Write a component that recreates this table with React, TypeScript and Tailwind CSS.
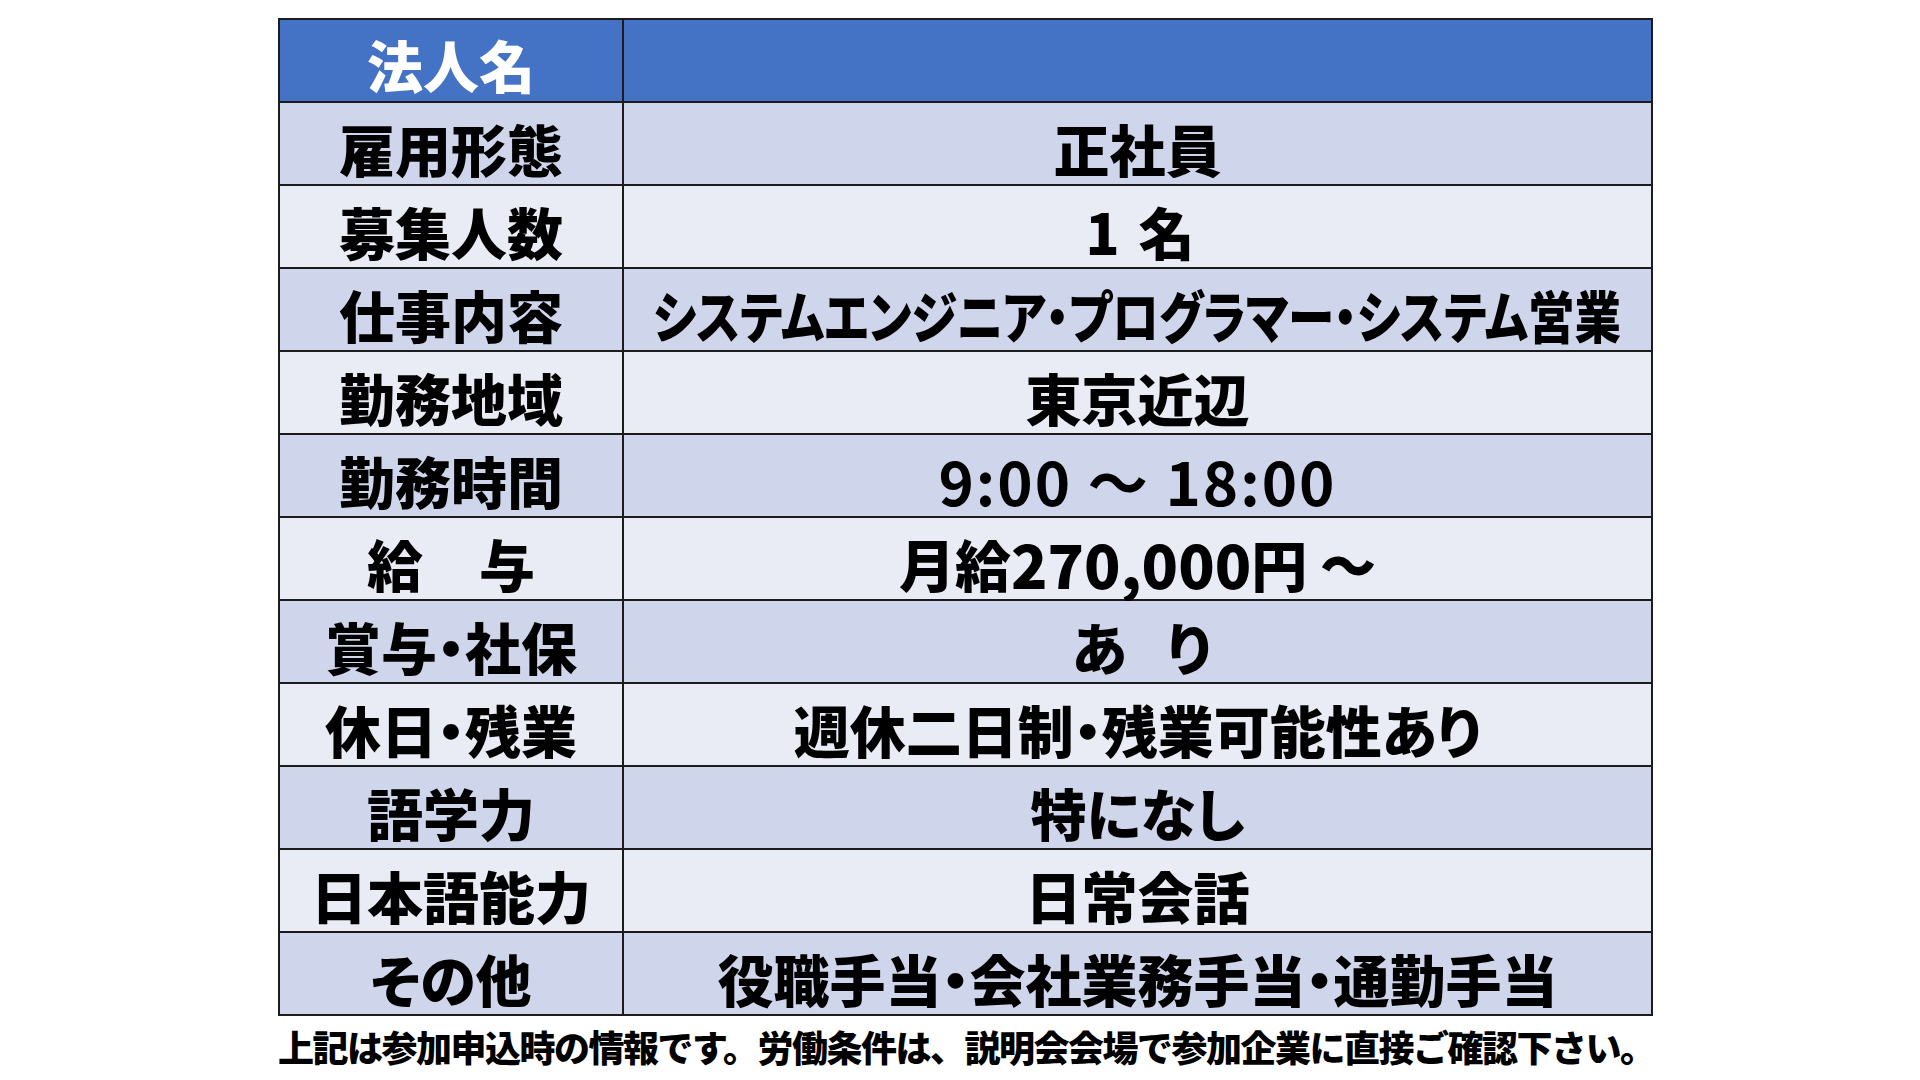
import React from "react";

type Row = {
  label: string;
  value: React.ReactNode;
  bg: string;
  valueClass?: string;
};

const FONT = "[font-family:'Noto_Sans_CJK_JP','Noto_Sans',sans-serif]";

const rows: Row[] = [
  { label: "雇用形態", value: "正社員", bg: "bg-[#cfd5ea]" },
  { label: "募集人数", value: "1 名", bg: "bg-[#e9ebf5]", valueClass: "tracking-[3px] pl-[8px]" },
  {
    label: "仕事内容",
    value: (
      <span className="inline-block shrink-0 scale-x-[0.83] [font-feature-settings:'palt']">
        システムエンジニア・プログラマー・システム営業
      </span>
    ),
    bg: "bg-[#cfd5ea]",
    valueClass: "text-[51px]",
  },
  { label: "勤務地域", value: "東京近辺", bg: "bg-[#e9ebf5]" },
  {
    label: "勤務時間",
    value: "9:00 ～ 18:00",
    bg: "bg-[#cfd5ea]",
    valueClass: "!font-bold text-[60px] tracking-[2px]",
  },
  {
    label: "給　与",
    value: (
      <>
        月給<span className="text-[60px]">270,000</span>円 ～
      </>
    ),
    bg: "bg-[#e9ebf5]",
  },
  {
    label: "賞与・社保",
    value: "あ　り",
    bg: "bg-[#cfd5ea]",
    valueClass: "[font-feature-settings:'palt'] tracking-[-8px]",
  },
  {
    label: "休日・残業",
    value: "週休二日制・残業可能性あり",
    bg: "bg-[#e9ebf5]",
    valueClass: "[font-feature-settings:'palt']",
  },
  { label: "語学力", value: "特になし", bg: "bg-[#cfd5ea]", valueClass: "[font-feature-settings:'palt']" },
  { label: "日本語能力", value: "日常会話", bg: "bg-[#e9ebf5]" },
  {
    label: "その他",
    value: "役職手当・会社業務手当・通勤手当",
    bg: "bg-[#cfd5ea]",
    valueClass: "[font-feature-settings:'palt']",
  },
];

export default function App() {
  return (
    <div className={`w-[1920px] h-[1080px] bg-white overflow-hidden ${FONT}`}>
      <div className="ml-[278px] pt-[18px] w-[1375px]">
        <div className="border-2 border-[#1c1c1c] flex flex-col">
          <div className="grid grid-cols-[344px_minmax(0,1fr)] h-[83px] border-b-2 border-[#1c1c1c] bg-[#4472c4]">
            <div className="border-r-2 border-[#1c1c1c] flex items-center justify-center pt-[6px] text-white text-[56px] font-black leading-none [font-feature-settings:'palt']">
              法人名
            </div>
            <div />
          </div>
          {rows.map((r, i) => (
            <div
              key={i}
              className={`grid grid-cols-[344px_minmax(0,1fr)] ${
                i === rows.length - 1 ? "h-[81px]" : "h-[83px] border-b-2 border-[#1c1c1c]"
              } ${r.bg}`}
            >
              <div className="border-r-2 border-[#1c1c1c] flex items-center justify-center pt-[8px] text-black text-[56px] font-black leading-none whitespace-nowrap [font-feature-settings:'palt']">
                {r.label}
              </div>
              <div
                className={`flex items-center justify-center pt-[8px] text-black text-[56px] font-black leading-none whitespace-nowrap ${
                  r.valueClass ?? ""
                }`}
              >
                {r.value}
              </div>
            </div>
          ))}
        </div>
        <div className="mt-[12px] text-black text-[36px] font-black leading-none tracking-[-1.5px] whitespace-nowrap">
          上記は参加申込時の情報です。労働条件は、説明会会場で参加企業に直接ご確認下さい。
        </div>
      </div>
    </div>
  );
}
